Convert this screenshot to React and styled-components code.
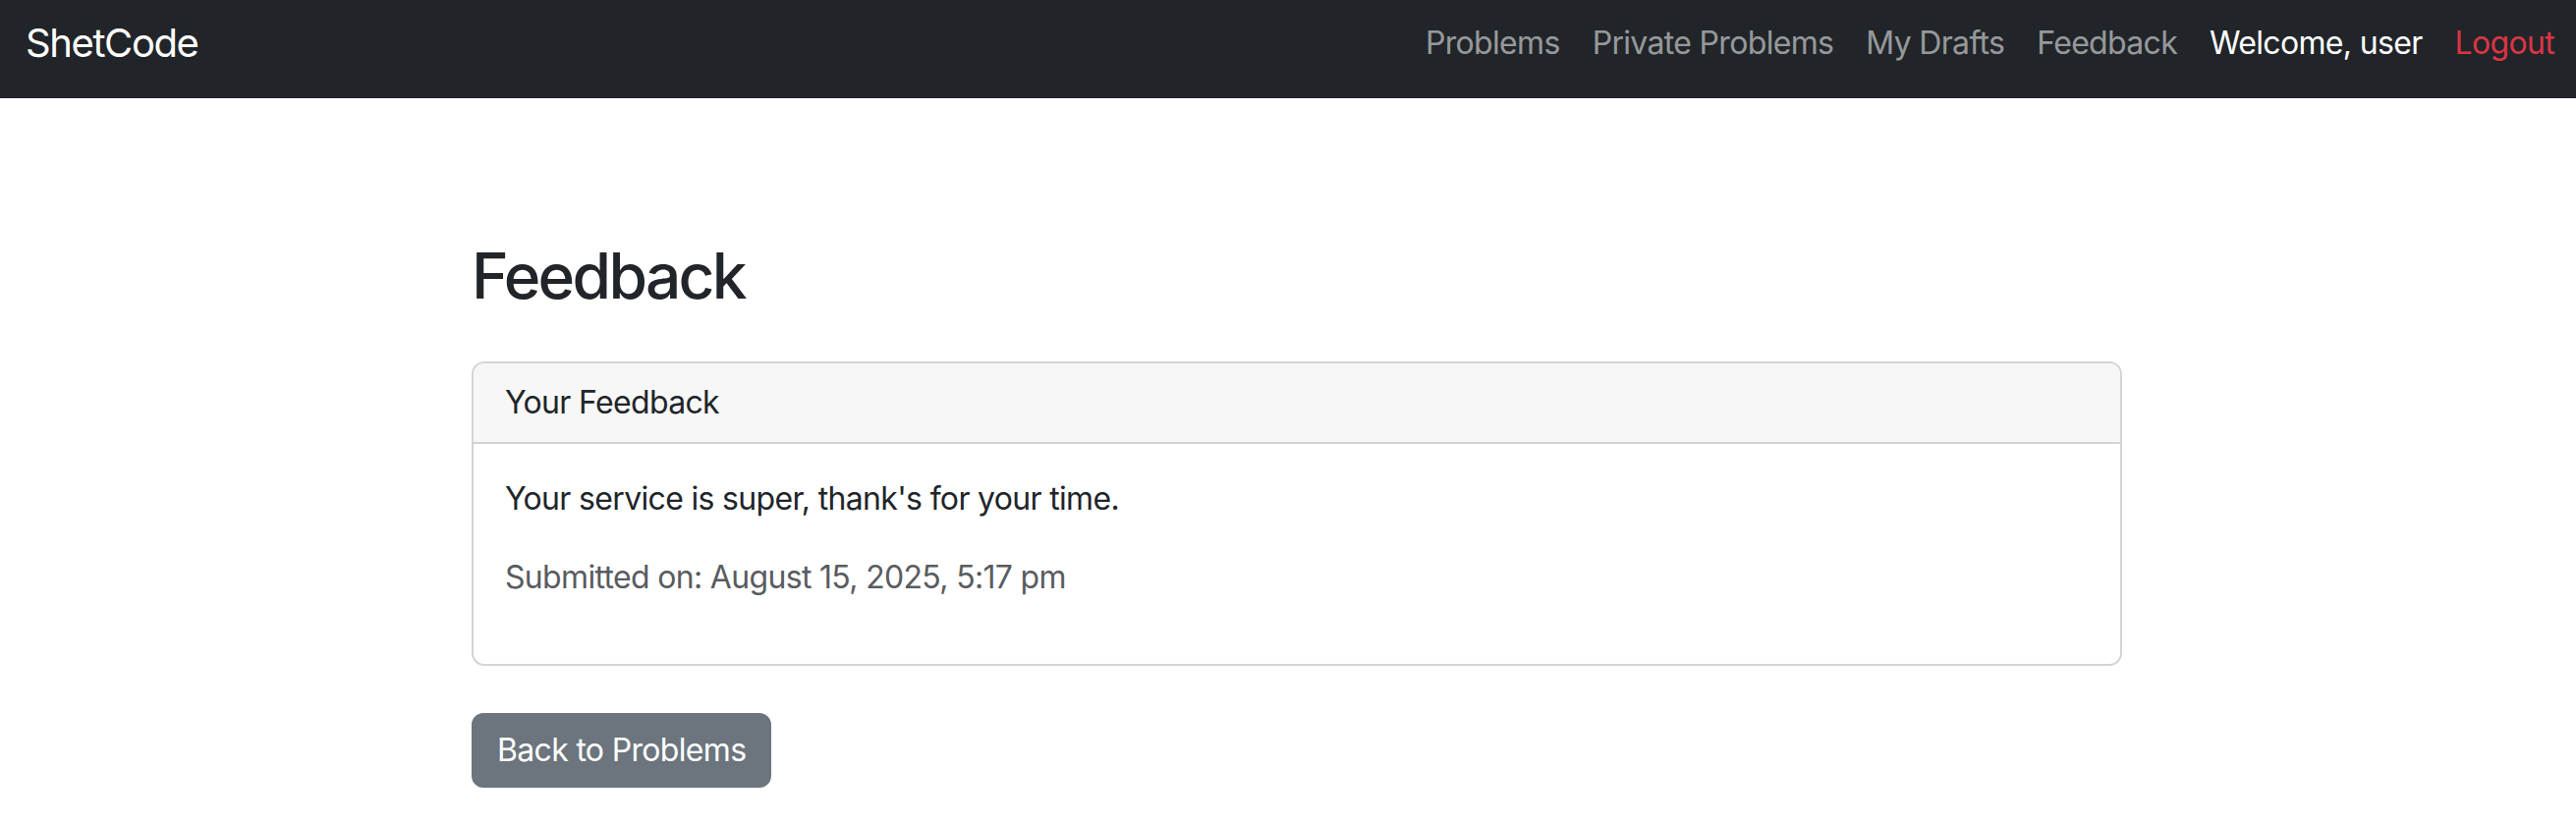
import React from 'react'
import styled, { createGlobalStyle } from 'styled-components'

const GlobalStyle = createGlobalStyle`
  * { box-sizing: border-box; }
  body {
    margin: 0;
    background: #fff;
    color: #212529;
    font-family: Inter, "Liberation Sans", sans-serif;
    font-size: 32px;
    line-height: 48px;
    letter-spacing: -0.021em;
  }
`

const links = [
  { label: 'Problems' },
  { label: 'Private Problems' },
  { label: 'My Drafts' },
  { label: 'Feedback' },
  { label: 'Welcome, user', tone: 'light' },
  { label: 'Logout', tone: 'danger' },
]

function App() {
  return (
    <>
      <GlobalStyle />
      <NavBar>
        <Brand href="#">ShetCode</Brand>
        <NavList>
          {links.map((l) => (
            <NavLink key={l.label} href="#" $tone={l.tone}>{l.label}</NavLink>
          ))}
        </NavList>
      </NavBar>
      <Main>
        <Title>Feedback</Title>
        <Card>
          <CardHeader>Your Feedback</CardHeader>
          <CardBody>
            <Text>Your service is super, thank's for your time.</Text>
            <Text $muted>Submitted on: August 15, 2025, 5:17 pm</Text>
          </CardBody>
        </Card>
        <BackButton>Back to Problems</BackButton>
      </Main>
    </>
  )
}

export default App

const NavBar = styled.nav`
    height: 100px;
    background-color: #212529;
    display: flex;
    align-items: center;
    justify-content: space-between;
    padding: 0 22px 12px 26px;
`
const Brand = styled.a`
    color: #fff;
    font-size: 40px;
    line-height: 60px;
    letter-spacing: -0.035em;
    text-decoration: none;
`
const NavList = styled.div`
    display: flex;
    align-items: center;
    gap: 33px;
`
const NavLink = styled.a`
    font-size: 32px;
    line-height: 48px;
    text-decoration: none;
    color: ${(p) => p.$tone === 'light' ? '#fff' : p.$tone === 'danger' ? '#dc3545' : 'rgba(255, 255, 255, 0.55)'};
`
const Main = styled.main`
    width: 1698px;
    margin: 0 auto;
    padding: 143px 0 0 18px;
`
const Title = styled.h2`
    margin: 0 0 48px;
    font-size: 64px;
    line-height: 1.2;
    font-weight: 500;
    letter-spacing: -0.042em;
`
const Card = styled.div`
    border: 2px solid #d3d4d5;
    border-radius: 13px;
    overflow: hidden;
`
const CardHeader = styled.div`
    background-color: #f7f7f7;
    border-bottom: 2px solid #d3d4d5;
    padding: 16px 32px;
`
const CardBody = styled.div`
    padding: 32px;
`
const Text = styled.p`
    margin: 0 0 32px;
    color: ${(p) => p.$muted ? '#595c5f' : '#212529'};
`
const BackButton = styled.button`
    margin-top: 48px;
    border: 2px solid #6c757d;
    border-radius: 12px;
    background-color: #6c757d;
    color: #fff;
    font-family: inherit;
    font-size: 32px;
    line-height: 48px;
    letter-spacing: inherit;
    padding: 12px 24px;
    cursor: pointer;
`
